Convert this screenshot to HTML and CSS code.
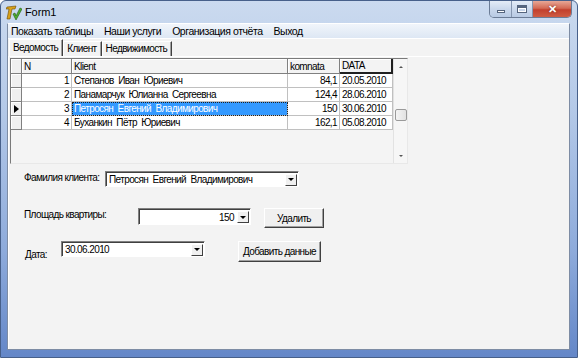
FILE: index.html
```html
<!DOCTYPE html>
<html lang="ru">
<head>
    <meta charset="UTF-8">
    <title>Form1</title>
    <link rel="stylesheet" href="styles.css">
</head>
<body>
    <div class="window">
        <div class="titlebar">
            <svg class="app-icon" width="16" height="16" viewBox="0 0 16 16">
                <path d="M1 2 L10 1 L9 4 L6 4 L4 14 L1 14 L3 4 L0 4 Z" fill="#d9a21b" stroke="#6b4a05" stroke-width="0.6"/>
                <path d="M7 9 L9 8 L10 11 L14 3 L16 4 L10 15 Z" fill="#4fae2f" stroke="#1f5a12" stroke-width="0.6"/>
            </svg>
            <span class="title">Form1</span>
            <div class="caption-btns">
                <span class="cap cap-min"><i></i></span>
                <span class="cap cap-max"><i></i></span>
                <span class="cap cap-close">✕</span>
            </div>
        </div>

        <div class="client">
            <div class="menubar">
                <span>Показать таблицы</span>
                <span>Наши услуги</span>
                <span>Организация отчёта</span>
                <span>Выход</span>
            </div>

            <div class="tabs">
                <span class="tab active">Ведомость</span>
                <span class="tab">Клиент</span>
                <span class="tab">Недвижимость</span>
            </div>

            <div class="page">
                <div class="grid">
                    <table class="grid-table">
                        <colgroup>
                            <col class="c-ind">
                            <col class="c-n">
                            <col class="c-klient">
                            <col class="c-komnata">
                            <col class="c-data">
                        </colgroup>
                        <tr>
                            <th class="ind"></th>
                            <th>N</th>
                            <th>Klient</th>
                            <th>komnata</th>
                            <th>DATA</th>
                        </tr>
                        <tr>
                            <td class="ind"></td>
                            <td class="num">1</td>
                            <td>Степанов  Иван  Юриевич</td>
                            <td class="num">84,1</td>
                            <td>20.05.2010</td>
                        </tr>
                        <tr>
                            <td class="ind"></td>
                            <td class="num">2</td>
                            <td>Панамарчук  Юлианна  Сергеевна</td>
                            <td class="num">124,4</td>
                            <td>28.06.2010</td>
                        </tr>
                        <tr>
                            <td class="ind"><span class="pointer"></span></td>
                            <td class="num">3</td>
                            <td class="selected">Петросян  Евгений  Владимирович</td>
                            <td class="num">150</td>
                            <td>30.06.2010</td>
                        </tr>
                        <tr>
                            <td class="ind"></td>
                            <td class="num">4</td>
                            <td>Буханкин  Пётр  Юриевич</td>
                            <td class="num">162,1</td>
                            <td>05.08.2010</td>
                        </tr>
                    </table>
                    <div class="vscroll">
                        <span class="sb-btn sb-up"></span>
                        <span class="sb-thumb"></span>
                        <span class="sb-space"></span>
                        <span class="sb-btn sb-down"></span>
                    </div>
                </div>

                <div class="form-row row-name">
                    <label class="lbl lbl-name">Фамилия клиента:</label>
                    <div class="combo combo-name">
                        <span class="combo-text">Петросян  Евгений  Владимирович</span>
                        <span class="combo-btn"></span>
                    </div>
                </div>

                <div class="form-row row-area">
                    <label class="lbl lbl-area">Площадь квартиры:</label>
                    <div class="combo combo-area">
                        <span class="combo-text right">150</span>
                        <span class="combo-btn"></span>
                    </div>
                    <button class="btn btn-del" type="button">Удалить</button>
                </div>

                <div class="form-row row-date">
                    <label class="lbl lbl-date">Дата:</label>
                    <div class="combo combo-date">
                        <span class="combo-text">30.06.2010</span>
                        <span class="combo-btn"></span>
                    </div>
                    <button class="btn btn-add" type="button">Добавить данные</button>
                </div>
            </div>
        </div>
    </div>
</body>
</html>
```

FILE: styles.css
```css
* {
    box-sizing: border-box;
}

body {
    margin: 0;
    padding: 0;
    width: 578px;
    height: 358px;
    overflow: hidden;
    font-family: "Liberation Sans", Arial, sans-serif;
    font-size: 10px;
    letter-spacing: -0.6px;
    color: #000;
    background: #fff;
}

.window {
    width: 578px;
    height: 358px;
    display: flex;
    flex-direction: column;
    padding: 0 7px 7px 6px;
    border-radius: 6px 6px 0 0;
    background: linear-gradient(180deg, #cbdaef 0%, #b4c9e8 30%, #8eabdb 70%, #6487c8 100%);
    border: 1px solid #47608a;
}

/* title bar */
.titlebar {
    height: 22px;
    display: flex;
    align-items: flex-start;
    margin: 0 -6px 0 -5px;
    padding-left: 4px;
}

.app-icon {
    margin-top: 4px;
}

.title {
    margin-left: 3px;
    margin-top: 5px;
    font-size: 11px;
    letter-spacing: -0.1px;
}

.caption-btns {
    margin-left: auto;
    margin-right: 4px;
    display: flex;
    height: 17px;
    border: 1px solid #6b7c96;
    border-top: none;
    border-radius: 0 0 5px 5px;
    overflow: hidden;
}

.cap {
    display: flex;
    align-items: center;
    justify-content: center;
    height: 100%;
    background: linear-gradient(180deg, #e4ecf7 0%, #cad8ec 50%, #b8cae4 100%);
    border-right: 1px solid #8596b0;
}

.cap-min {
    width: 22px;
}

.cap-min i {
    width: 8px;
    height: 3px;
    margin-top: 5px;
    background: #fff;
    border: 1px solid #55657e;
}

.cap-max {
    width: 21px;
}

.cap-max i {
    width: 10px;
    height: 8px;
    border: 1px solid #55657e;
    border-top-width: 3px;
    box-shadow: inset 0 0 0 1px #fff;
}

.cap-close {
    width: 38px;
    border-right: none;
    background: linear-gradient(180deg, #e7a796 0%, #d36a55 45%, #c2402d 55%, #cf5c43 100%);
    color: #fff;
    font-size: 11px;
    font-weight: bold;
    letter-spacing: 0;
    text-shadow: 0 0 2px #6a1a10;
}

/* client area */
.client {
    flex: 1;
    display: flex;
    flex-direction: column;
    background: #f3f3f3;
    border: 1px solid #7d8ca4;
    border-top: 1px solid #fff;
}

.menubar {
    height: 15px;
    display: flex;
    align-items: center;
    padding-left: 3px;
    font-size: 10.5px;
    letter-spacing: -0.45px;
    background: linear-gradient(180deg, #f1f5fb 0%, #dde7f4 100%);
    border-bottom: 1px solid #fff;
}

.menubar span {
    margin-right: 11px;
}

/* tabs */
.tabs {
    height: 17px;
    display: flex;
    align-items: flex-end;
    padding-left: 1px;
}

.tab {
    height: 15px;
    padding: 0 4px 0 3px;
    line-height: 14px;
    white-space: nowrap;
    border-left: 1px solid #fff;
    border-top: 1px solid #fff;
    border-right: 1px solid #404040;
    box-shadow: inset -1px 0 0 #a0a0a0;
}

.tab.active {
    height: 17px;
    line-height: 15px;
    padding: 0 4px 0 3px;
}

/* tab page */
.page {
    flex: 1;
    border-top: 1px solid #fff;
    border-left: 1px solid #fff;
    padding: 1px 0 0 1px;
}

/* grid */
.grid {
    width: 398px;
    height: 106px;
    display: flex;
    border: 1px solid #7a7a7a;
    border-right-color: #e8e8e8;
    border-bottom-color: #e8e8e8;
    background: #f4f4f4;
}

.grid-table {
    width: 382px;
    align-self: flex-start;
    table-layout: fixed;
    border-collapse: separate;
    border-spacing: 0;
}

.c-ind { width: 11px; }
.c-n { width: 50px; }
.c-klient { width: 216px; }
.c-komnata { width: 52px; }
.c-data { width: 53px; }

.grid-table th,
.grid-table td {
    padding: 0 2px;
    height: 14px;
    line-height: 13px;
    white-space: pre;
    overflow: hidden;
    text-align: left;
    font-weight: normal;
    border-right: 1px solid #c0c0c0;
    border-bottom: 1px solid #c0c0c0;
    background: #fff;
}

.grid-table th {
    height: 15px;
    background: #f3f3f3;
    border-right: 1px solid #808080;
    border-bottom: 1px solid #808080;
    box-shadow: inset 1px 1px 0 #fff;
}

.grid-table th:last-child {
    border-right: 2px solid #202020;
    border-bottom: 2px solid #202020;
}

.grid-table .ind {
    padding: 0;
    background: #f0f0f0;
    border-right: 1px solid #808080;
    border-bottom: 1px solid #808080;
    box-shadow: inset 1px 1px 0 #fff;
}

.grid-table .num {
    text-align: right;
    padding-right: 2px;
}

.grid-table .selected {
    background: #3399ff;
    color: #fff;
    outline: 1px dotted #222;
    outline-offset: -1px;
}

.pointer {
    display: block;
    width: 0;
    height: 0;
    margin-left: 3px;
    border-top: 4px solid transparent;
    border-bottom: 4px solid transparent;
    border-left: 5px solid #000;
}

.vscroll {
    width: 14px;
    display: flex;
    flex-direction: column;
    align-items: center;
    background: #f6f6f6;
    border-left: 1px solid #e2e2e2;
}

.sb-btn {
    width: 13px;
    display: flex;
    justify-content: center;
}

.sb-up {
    height: 16px;
    align-items: center;
}

.sb-up::after {
    content: "";
    border-left: 2px solid transparent;
    border-right: 2px solid transparent;
    border-bottom: 2px solid #555;
}

.sb-down {
    height: 14px;
    align-items: center;
}

.sb-down::after {
    content: "";
    border-left: 2px solid transparent;
    border-right: 2px solid transparent;
    border-top: 2px solid #555;
}

.sb-thumb {
    width: 12px;
    height: 12px;
    margin-top: 34px;
    border: 1px solid #9a9a9a;
    border-radius: 2px;
    background: linear-gradient(90deg, #f4f4f4 0%, #e2e2e2 100%);
}

.sb-space {
    flex: 1;
}

/* form controls */
.form-row {
    display: flex;
    align-items: flex-start;
    padding-left: 14px;
}

.row-name {
    margin-top: 7px;
}

.row-area {
    margin-top: 21px;
}

.row-date {
    margin-top: 13px;
}

.lbl {
    line-height: 13px;
    white-space: nowrap;
}

.lbl-name {
    width: 81px;
}

.lbl-area {
    width: 114px;
}

.lbl-date {
    width: 37px;
    margin-top: 7px;
    padding-left: 1px;
}

.combo {
    display: flex;
    align-items: center;
    height: 16px;
    background: #fff;
    border-top: 1px solid #808080;
    border-left: 1px solid #808080;
    border-right: 1px solid #fff;
    border-bottom: 1px solid #fff;
    box-shadow: inset 1px 1px 0 #404040;
    padding: 1px 1px 0 3px;
}

.combo-text {
    flex: 1;
    white-space: pre;
    line-height: 13px;
}

.combo-text.right {
    text-align: right;
    padding-right: 3px;
}

.combo-btn {
    width: 12px;
    height: 12px;
    display: flex;
    align-items: center;
    justify-content: center;
    background: #f0f0f0;
    border-top: 1px solid #fff;
    border-left: 1px solid #fff;
    border-right: 1px solid #404040;
    border-bottom: 1px solid #404040;
}

.combo-btn::after {
    content: "";
    border-left: 3px solid transparent;
    border-right: 3px solid transparent;
    border-top: 3px solid #000;
}

.combo-name {
    width: 194px;
}

.combo-area {
    width: 113px;
    height: 17px;
}

.combo-date {
    width: 144px;
}

.btn {
    font-family: "Liberation Sans", Arial, sans-serif;
    font-size: 10px;
    letter-spacing: -0.6px;
    color: #000;
    padding: 0;
    white-space: nowrap;
    background: #f0f0f0;
    border-top: 1px solid #fff;
    border-left: 1px solid #fff;
    border-right: 1px solid #404040;
    border-bottom: 1px solid #404040;
    box-shadow: inset -1px -1px 0 #a0a0a0;
}

.btn-del {
    width: 60px;
    height: 20px;
    margin-left: 13px;
}

.btn-add {
    width: 83px;
    height: 21px;
    margin-left: 33px;
}
```
